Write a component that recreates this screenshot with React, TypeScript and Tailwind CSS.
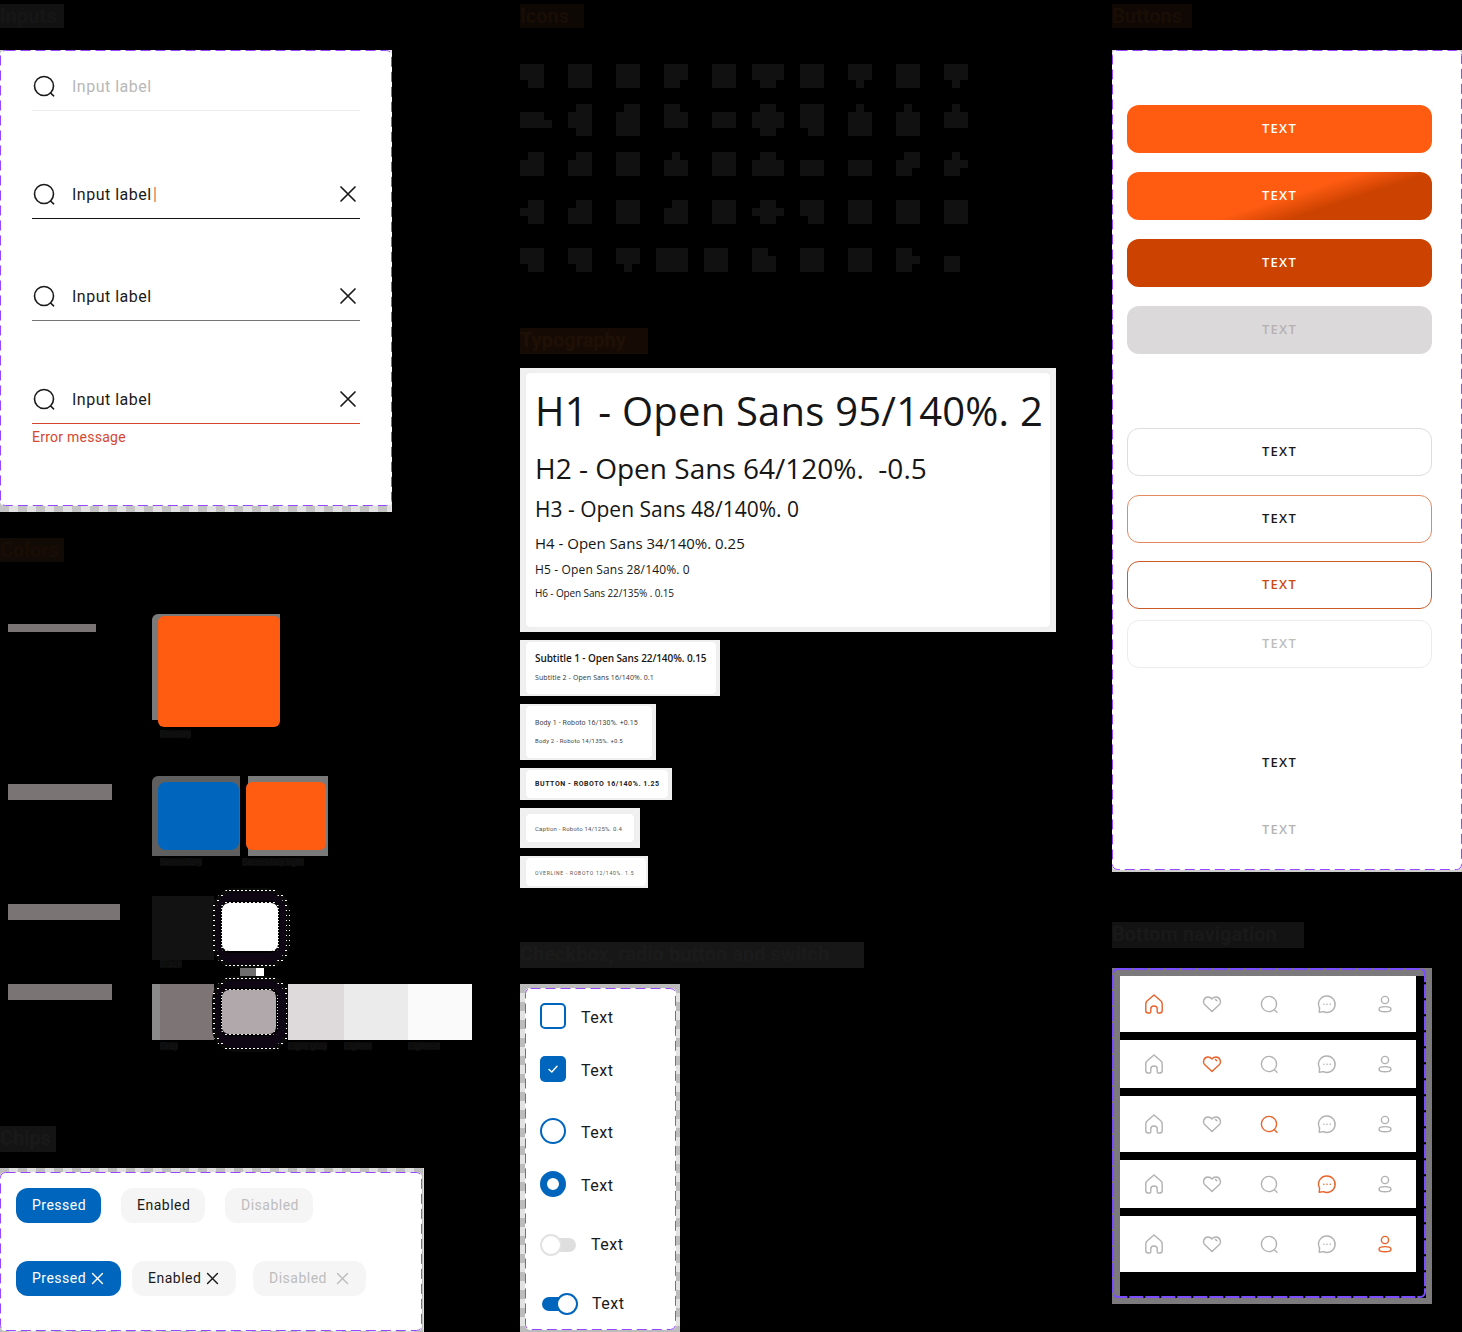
import React from "react";

const ICONS: [number, number, string[]][][] = [
  [
    [0, 64, ["111", "111", "011"]], [48, 64, ["111", "111", "111"]], [96, 64, ["111", "111", "111"]], [144, 64, ["111", "111", "110"]], [192, 64, ["111", "111", "111"]],
    [232, 64, ["1111", "1111", "0110"]], [280, 64, ["111", "111", "111"]], [328, 64, ["111", "111", "010"]], [376, 64, ["111", "111", "111"]], [424, 64, ["111", "111", "010"]],
  ],
  [
    [0, 112, ["1110", "1111"]], [48, 104, ["011", "111", "111", "011"]], [96, 104, ["011", "111", "111", "111"]], [144, 104, ["110", "111", "111"]], [192, 112, ["111", "111"]],
    [232, 104, ["0110", "1111", "1111", "0110"]], [280, 104, ["111", "111", "111", "011"]], [328, 104, ["010", "111", "111", "111"]], [376, 104, ["010", "111", "111", "111"]], [424, 104, ["010", "111", "111"]],
  ],
  [
    [0, 152, ["011", "111", "111"]], [48, 152, ["011", "111", "111"]], [96, 152, ["111", "111", "111"]], [144, 152, ["010", "111", "111"]], [192, 152, ["111", "111", "111"]],
    [232, 152, ["0110", "1111", "1111"]], [280, 160, ["111", "111"]], [328, 160, ["111", "111"]], [376, 152, ["011", "111", "110"]], [424, 152, ["010", "111", "110"]],
  ],
  [
    [0, 200, ["011", "111", "011"]], [48, 200, ["011", "111", "111"]], [96, 200, ["111", "111", "111"]], [144, 200, ["011", "111", "111"]], [192, 200, ["111", "111", "111"]],
    [232, 200, ["0110", "1111", "0110"]], [280, 200, ["111", "111", "011"]], [328, 200, ["111", "111", "111"]], [376, 200, ["111", "111", "111"]], [424, 200, ["111", "111", "111"]],
  ],
  [
    [0, 248, ["111", "111", "011"]], [48, 248, ["111", "111", "011"]], [96, 248, ["111", "111", "010"]], [136, 248, ["1111", "1111", "1111"]], [184, 248, ["111", "111", "111"]],
    [232, 248, ["110", "111", "111"]], [280, 248, ["111", "111", "111"]], [328, 248, ["111", "111", "111"]], [376, 248, ["110", "111", "110"]], [424, 256, ["11", "11"]],
  ],
];

function IconSheet() {
  return (
    <svg width="448" height="272" viewBox="0 0 448 272" className="block">
      {ICONS.flat().map(([x, y, rows], i) =>
        rows.map((row, r) =>
          row.split("").map((c, k) =>
            c === "1" ? <rect key={`${i}-${r}-${k}`} x={x + k * 8} y={y + r * 8} width="8" height="8" fill="#111111" /> : null,
          ),
        ),
      )}
    </svg>
  );
}

function Dash({ color = "#9747ff", dash = "10 5", sw = 1 }: { color?: string; dash?: string; sw?: number }) {
  const inset = sw / 2;
  return (
    <svg className="absolute inset-0 w-full h-full pointer-events-none">
      <rect
        x={inset}
        y={inset}
        rx="5"
        className={sw === 1 ? "w-[calc(100%-1px)] h-[calc(100%-1px)]" : "w-[calc(100%-2px)] h-[calc(100%-2px)]"}
        fill="none"
        stroke={color}
        strokeWidth={sw}
        strokeDasharray={dash}
      />
    </svg>
  );
}

function Search() {
  return (
    <svg width="24" height="24" viewBox="0 0 24 24" fill="none">
      <circle cx="12" cy="12" r="9.5" stroke="currentColor" strokeWidth="1.6" />
      <path d="M18.6 19 L21.6 21.8" stroke="currentColor" strokeWidth="1.6" strokeLinecap="round" />
    </svg>
  );
}

function Close({ size = 24, width = 1.7 }: { size?: number; width?: number }) {
  return (
    <svg width={size} height={size} viewBox="0 0 24 24" fill="none" className="shrink-0">
      <path d="M5 5 L19 19 M19 5 L5 19" stroke="currentColor" strokeWidth={width} strokeLinecap="round" />
    </svg>
  );
}

function InputRow({ line, text, mt, close = true, caret = false }: { line: string; text: string; mt: string; close?: boolean; caret?: boolean }) {
  return (
    <div className={`${mt} h-[49px] flex flex-col text-[#1a1a1a]`}>
      <div className="flex-1 flex items-center">
        <Search />
        <span className={`ml-[16px] mt-px text-[16px] leading-[24px] tracking-[0.5px] ${text}`}>Input label</span>
        {caret && <span className="ml-[2px] w-[2px] h-[15px] bg-[#f4a36a]" />}
        {close && (
          <span className="ml-auto">
            <Close />
          </span>
        )}
      </div>
      <div className={`h-px ${line}`} />
    </div>
  );
}

function Title({ children, className }: { children: React.ReactNode; className: string }) {
  return <div className={`font-bold whitespace-nowrap text-[20px] leading-[24px] ${className}`}>{children}</div>;
}

function Halo({ swatch, h, inner, pt }: { swatch: string; h: string; inner: string; pt: string }) {
  return (
    <div className={`${h} w-[78px] -ml-[2px] shrink-0 rounded-[24px] bg-[#0a0a0a] bg-[radial-gradient(circle,#ffffff_0.6px,transparent_1px)] bg-[length:4px_5px] p-[4px]`}>
      <div className={`h-full rounded-[20px] bg-[#0d0512] pl-[4px] ${pt}`}>
        <div className="w-fit rounded-[9px] bg-[radial-gradient(circle,#e8e8e8_0.5px,#000000_1px)] bg-[length:4px_3px] p-[2px]">
          <div className={`${inner} rounded-[7px] ${swatch}`} />
        </div>
      </div>
    </div>
  );
}

function Caption({ children, className = "" }: { children: React.ReactNode; className?: string }) {
  return <div className={`text-[9px] leading-[8px] h-[8px] whitespace-nowrap bg-[#0c0c0c] text-[#141414] w-fit ${className}`}>{children}</div>;
}

function MiniCard({ outer, inner, children }: { outer: string; inner: string; children: React.ReactNode }) {
  return (
    <div className={`bg-[#f0f0f0] ${outer}`}>
      <div className={`bg-white rounded-[5px] border border-[#eeeeee] ${inner}`}>{children}</div>
    </div>
  );
}

function Btn({ cls, mt }: { cls: string; mt: string }) {
  return (
    <div className={`h-[48px] w-[305px] rounded-[12px] flex items-center justify-center font-['Open_Sans',sans-serif] font-semibold text-[13px] tracking-[1.25px] ${mt} ${cls}`}>TEXT</div>
  );
}

function Chip({ label, cls, w, close, gap = "gap-[3px]" }: { label: string; cls: string; w: string; close?: boolean; gap?: string }) {
  return (
    <div className={`h-[35px] rounded-[12px] flex items-center pl-[16px] text-[14px] tracking-[0.5px] ${gap} ${w} ${cls}`}>
      <span>{label}</span>
      {close && <Close size={17} width={2} />}
    </div>
  );
}

type NavName = "home" | "heart" | "search" | "chat" | "user";
function NavIcon({ name, active }: { name: NavName; active: boolean }) {
  const c = active ? "text-[#e8622a]" : "text-[#b3b1b1]";
  const p = { stroke: "currentColor", strokeWidth: 1.4, fill: "none", strokeLinecap: "round" as const, strokeLinejoin: "round" as const };
  return (
    <svg width="22" height="22" viewBox="0 0 22 22" className={`${c} justify-self-center`}>
      {name === "home" && <path {...p} d="M11 2 L4 8 Q2.8 9.2 2.8 11 V17.5 Q2.8 20 5.2 20 H6.6 Q7.8 20 7.8 18.8 V16 Q7.8 13 11 13 Q14.2 13 14.2 16 V18.8 Q14.2 20 15.4 20 H16.8 Q19.2 20 19.2 17.5 V11 Q19.2 9.2 18 8 Z" />}
      {name === "heart" && (
        <>
          <path {...p} d="M11 18.5 L3.8 11.8 C1.4 9.4 2.6 4 7 4 C9 4 10.2 5 11 6 C11.8 5 13 4 15 4 C19.4 4 20.6 9.4 18.2 11.8 Z" />
          <path {...p} d="M14.5 6.5 L15.8 7.8" />
        </>
      )}
      {name === "search" && (
        <>
          <circle {...p} cx="11" cy="11" r="7.6" />
          <path {...p} d="M16.4 16.8 L19 19.2" />
        </>
      )}
      {name === "chat" && (
        <>
          <path {...p} d="M11 3 A8.2 8.2 0 1 1 7.4 18.6 L3.2 19.2 L3.6 15.2 A8.2 8.2 0 0 1 11 3 Z" />
          <path {...p} strokeWidth={1.5} d="M7.8 11.2 H7.85 M11 11.2 H11.05 M14.2 11.2 H14.25" />
        </>
      )}
      {name === "user" && (
        <>
          <circle {...p} cx="11" cy="7" r="3.6" />
          <ellipse {...p} cx="11" cy="16.2" rx="6" ry="2.6" />
        </>
      )}
    </svg>
  );
}

function NavRow({ active, h }: { active: number; h: string }) {
  const names: NavName[] = ["home", "heart", "search", "chat", "user"];
  return (
    <div className={`${h} bg-white w-[296px] grid grid-cols-5 items-center pl-[5px] pr-[2px]`}>
      {names.map((n, i) => (
        <NavIcon key={n} name={n} active={i === active} />
      ))}
    </div>
  );
}

function Check({ children }: { children: React.ReactNode }) {
  return <div className="flex items-center">{children}</div>;
}

const labelText = "text-[16px] leading-[24px] tracking-[0.5px] text-[#1a1a1a]";

export default function App() {
  return (
    <div className="w-[1462px] h-[1332px] overflow-hidden bg-black flex font-['Roboto',sans-serif]">
      {/* column 1 */}
      <div className="w-[520px] shrink-0">
        <Title className="w-[64px] h-[28px] pt-[4px] bg-clip-content bg-[#121212] text-[#161616]">Inputs</Title>
        <div className="mt-[22px] w-[392px] h-[462px] bg-[repeating-linear-gradient(90deg,#c4c4c4_0_9px,#e2e2e2_9px_18px)]">
          <div className="relative w-[392px] h-[456px] bg-white rounded-[5px] px-[32px] pt-[12px]">
            <Dash />
            <InputRow mt="" line="bg-[#ececec]" text="text-[#b8b8b8]" close={false} />
            <InputRow mt="mt-[59px]" line="bg-[#111111]" text="" caret />
            <InputRow mt="mt-[53px]" line="bg-[#757575]" text="" />
            <InputRow mt="mt-[54px]" line="bg-[#d5482f]" text="" />
            <div className="mt-[3px] text-[14px] leading-[20px] tracking-[0.25px] text-[#d5482f]">Error message</div>
          </div>
        </div>

        <Title className="mt-[26px] w-[64px] h-[24px] bg-[#120a04] text-[#190d05]">Colors</Title>

        {/* Row 1 */}
        <div className="mt-[52px] h-[126px] flex items-start">
          <div className="w-[152px] pl-[8px] pt-[10px]">
            <div className="w-[88px] h-[8px] bg-[#7a7475] text-[8px] leading-[8px] text-[#7a7475] whitespace-nowrap">Primary color</div>
          </div>
          <div className="w-[128px]">
            <div className="h-[106px] bg-[#7a7a7a] rounded-tl-[6px] pl-[6px] pt-[2px]">
              <div className="h-[111px] bg-[#ff5c12] rounded-[6px]" />
            </div>
            <Caption className="mt-[10px] ml-[8px]">Primary</Caption>
          </div>
        </div>

        {/* Row 2 */}
        <div className="mt-[36px] h-[90px] flex items-start">
          <div className="w-[152px] pl-[8px] pt-[8px]">
            <div className="w-[104px] h-[16px] bg-[#7a7475] text-[13px] leading-[16px] text-[#7a7475] whitespace-nowrap">Secondary colors</div>
          </div>
          <div>
            <div className="w-[88px] h-[80px] bg-[#5f5f5f] flex items-center pl-[6px] rounded-tl-[6px]">
              <div className="w-[81px] h-[68px] bg-[#0066bd] rounded-[8px]" />
            </div>
            <Caption className="mt-[2px] ml-[8px]">Secondary</Caption>
          </div>
          <div className="ml-[8px]">
            <div className="w-[80px] h-[80px] bg-[#7a7a7a] flex items-center">
              <div className="-ml-[2px] w-[80px] h-[68px] bg-[#ff5c12] rounded-[6px]" />
            </div>
            <Caption className="mt-[2px] -ml-[6px]">Secondary light</Caption>
          </div>
        </div>

        {/* Row 3 */}
        <div className="mt-[22px] h-[80px] flex items-start">
          <div className="w-[152px] pl-[8px] pt-[16px]">
            <div className="w-[112px] h-[16px] bg-[#7a7475] text-[11px] leading-[16px] text-[#7a7475] whitespace-nowrap">Black and white colors</div>
          </div>
          <div className="w-[62px] shrink-0 pt-[8px]">
            <div className="h-[64px] bg-[#121212]" />
            <Caption className="ml-[8px]">Black</Caption>
          </div>
          <Halo swatch="bg-white" h="h-[80px]" inner="w-[56px] h-[48px]" pt="pt-[9px]" />
        </div>

        <div className="h-[8px] ml-[240px] flex">
          <div className="w-[16px] h-[8px] bg-[#6e6e6e]" />
          <div className="w-[8px] h-[8px] bg-white" />
        </div>

        {/* Row 4 */}
        <div className="h-[76px] flex items-start">
          <div className="w-[152px] pl-[8px] pt-[8px]">
            <div className="w-[104px] h-[16px] bg-[#7a7475] text-[13px] leading-[16px] text-[#7a7475] whitespace-nowrap">Neutral colors</div>
          </div>
          <div className="w-[62px] shrink-0 pt-[8px]">
            <div className="h-[56px] bg-[#7d7476] border-l-8 border-[#8b8b8b]" />
            <Caption className="mt-[2px] ml-[8px]">Gray</Caption>
          </div>
          <Halo swatch="bg-[#b0a8aa]" h="h-[76px]" inner="w-[54px] h-[44px]" pt="pt-[8px]" />
          <div className="w-[56px] shrink-0 pt-[8px] -ml-[2px]">
            <div className="h-[56px] bg-[#dedadb]" />
            <Caption className="mt-[2px]">Light gray</Caption>
          </div>
          <div className="w-[64px] shrink-0 pt-[8px]">
            <div className="h-[56px] bg-[#ebebeb]" />
            <Caption className="mt-[2px]">Lighter</Caption>
          </div>
          <div className="w-[64px] shrink-0 pt-[8px]">
            <div className="h-[56px] bg-[#fafafa]" />
            <Caption className="mt-[2px]">Lightest</Caption>
          </div>
        </div>

        <Title className="mt-[74px] w-[56px] h-[26px] bg-[#141414] text-[#191919]">Chips</Title>
        <div className="mt-[16px] w-[424px] h-[164px] bg-[repeating-linear-gradient(90deg,#bdbdbd_0_9px,#dedede_9px_18px)] pt-[4px]">
          <div className="relative w-[422px] h-[159px] bg-white rounded-[5px] px-[16px] pt-[16px]">
            <Dash />
            <div className="flex">
              <Chip label="Pressed" w="w-[85px]" cls="bg-[#0066bd] text-white" />
              <Chip label="Enabled" w="w-[84px] ml-[20px]" cls="bg-[#f5f5f5] text-[#1a1a1a]" />
              <Chip label="Disabled" w="w-[88px] ml-[20px]" cls="bg-[#f5f5f5] text-[#bdbdbd]" />
            </div>
            <div className="flex mt-[38px]">
              <Chip label="Pressed" w="w-[105px]" cls="bg-[#0066bd] text-white" close />
              <Chip label="Enabled" w="w-[104px] ml-[11px]" cls="bg-[#f5f5f5] text-[#1a1a1a]" close />
              <Chip label="Disabled" w="w-[113px] ml-[17px]" gap="gap-[7px]" cls="bg-[#f5f5f5] text-[#bdbdbd]" close />
            </div>
          </div>
        </div>
      </div>

      {/* column 2 */}
      <div className="w-[592px] shrink-0">
        <Title className="w-[64px] h-[28px] pt-[4px] bg-clip-content bg-[#0e0804] text-[#190d05]">Icons</Title>
        <div className="-mt-[28px]">
          <IconSheet />
        </div>
        <Title className="mt-[56px] w-[128px] h-[26px] bg-[#160b04] text-[#1f1006]">Typography</Title>
        <MiniCard outer="mt-[14px] w-[536px] h-[264px] px-[5px] pt-[4px] pb-[4px]" inner="h-full pl-[9px] font-['Open_Sans',sans-serif] text-[#161616]">
          <div className="pt-[10px] text-[40px] leading-[56px] whitespace-nowrap tracking-[0.2px]">H1 - Open Sans 95/140%. 2</div>
          <div className="mt-[9px] text-[28px] leading-[40px] font-medium whitespace-nowrap">H2 - Open Sans 64/120%.&nbsp; -0.5</div>
          <div className="mt-[6px] text-[21px] leading-[30px] whitespace-nowrap">H3 - Open Sans 48/140%. 0</div>
          <div className="mt-[7px] text-[15px] leading-[24px] whitespace-nowrap font-medium">H4 - Open Sans 34/140%. 0.25</div>
          <div className="mt-[6px] text-[12px] leading-[18px] whitespace-nowrap tracking-[0.16px]">H5 - Open Sans 28/140%. 0</div>
          <div className="mt-[7px] text-[10px] leading-[14px] whitespace-nowrap tracking-[-0.12px]">H6 - Open Sans 22/135% . 0.15</div>
        </MiniCard>
        <MiniCard outer="mt-[8px] w-[200px] h-[56px] pl-[5px] pr-[3px] py-[1px]" inner="h-full pl-[9px] pt-[8px] font-['Open_Sans',sans-serif] text-[#161616]">
          <div className="text-[10px] leading-[16px] font-semibold whitespace-nowrap tracking-[-0.08px]">Subtitle 1 - Open Sans 22/140%. 0.15</div>
          <div className="mt-[6px] text-[7px] leading-[12px] font-medium whitespace-nowrap text-[#333333] tracking-[0.1px]">Subtitle 2 - Open Sans 16/140%. 0.1</div>
        </MiniCard>
        <MiniCard outer="mt-[8px] w-[136px] h-[56px] pl-[5px] pr-[3px] py-[1px]" inner="h-full pl-[9px] pt-[11px] text-[#444444]">
          <div className="text-[7px] leading-[12px] whitespace-nowrap tracking-[0.1px]">Body 1 - Roboto 16/130%. +0.15</div>
          <div className="mt-[6px] text-[6px] leading-[12px] whitespace-nowrap tracking-[0.2px]">Body 2 - Roboto 14/135%. +0.5</div>
        </MiniCard>
        <MiniCard outer="mt-[8px] w-[152px] h-[32px] pl-[5px] pr-[3px] py-[1px]" inner="h-full pl-[9px] flex items-center text-[#222222]">
          <div className="text-[7px] font-bold tracking-[0.55px] whitespace-nowrap">BUTTON - ROBOTO 16/140%. 1.25</div>
        </MiniCard>
        <MiniCard outer="mt-[8px] w-[120px] h-[40px] pl-[5px] pr-[5px] py-[5px]" inner="h-full pl-[9px] flex items-center text-[#555555]">
          <div className="text-[6px] tracking-[0.2px] whitespace-nowrap">Caption - Roboto 14/125%. 0.4</div>
        </MiniCard>
        <MiniCard outer="mt-[8px] w-[128px] h-[32px] pl-[5px] pr-[1px] py-[1px]" inner="h-full pl-[9px] pt-[3px] flex items-center text-[#555555]">
          <div className="text-[5px] tracking-[0.75px] whitespace-nowrap">OVERLINE - ROBOTO 12/140%. 1.5</div>
        </MiniCard>

        <Title className="mt-[54px] w-[344px] h-[26px] bg-[#171717] text-[#1b1b1b]">Checkbox, radio button and switch</Title>
        <div className="mt-[16px] w-[160px] h-[348px] bg-[repeating-linear-gradient(180deg,#bcbcbc_0_9px,#e2e2e2_9px_18px)] pl-[5px] pr-[4px] pt-[4px] pb-[2px]">
          <div className="relative h-full bg-white rounded-[5px] pl-[15px] pt-[15px]">
            <Dash />
            <Check>
              <span className="w-[26px] h-[26px] rounded-[5px] border-2 border-[#0066bd]" />
              <span className={`ml-[15px] translate-y-[2px] ${labelText}`}>Text</span>
            </Check>
            <Check>
              <span className="mt-[27px] w-[26px] h-[26px] rounded-[5px] bg-[#0066bd] flex items-center justify-center">
                <svg width="14" height="14" viewBox="0 0 14 14" fill="none">
                  <path d="M3 7.4 L5.8 10 L11 4.2" stroke="white" strokeWidth="1.4" strokeLinecap="round" strokeLinejoin="round" />
                </svg>
              </span>
              <span className={`ml-[15px] mt-[27px] translate-y-[2px] ${labelText}`}>Text</span>
            </Check>
            <Check>
              <span className="mt-[36px] w-[26px] h-[26px] rounded-full border-2 border-[#0066bd]" />
              <span className={`ml-[15px] mt-[36px] translate-y-[2px] ${labelText}`}>Text</span>
            </Check>
            <Check>
              <span className="mt-[27px] w-[26px] h-[26px] rounded-full border-[7px] border-[#0066bd] bg-white" />
              <span className={`ml-[15px] mt-[27px] translate-y-[2px] ${labelText}`}>Text</span>
            </Check>
            <Check>
              <span className="mt-[36px] w-[36px] h-[24px] flex items-center">
                <span className="w-[22px] h-[22px] rounded-full bg-white border-2 border-[#e2e2e2] shrink-0 z-10" />
                <span className="-ml-[10px] w-[24px] h-[14px] rounded-r-full bg-[#dedede]" />
              </span>
              <span className={`ml-[15px] mt-[36px] ${labelText}`}>Text</span>
            </Check>
            <Check>
              <span className="mt-[35px] ml-[2px] w-[36px] h-[24px] flex items-center">
                <span className="w-[24px] h-[14px] rounded-l-full bg-[#0066bd]" />
                <span className="-ml-[10px] w-[22px] h-[22px] rounded-full bg-white border-2 border-[#0066bd] shrink-0" />
              </span>
              <span className={`ml-[14px] mt-[35px] ${labelText}`}>Text</span>
            </Check>
          </div>
        </div>
      </div>

      {/* column 3 */}
      <div className="w-[350px] shrink-0">
        <Title className="w-[80px] h-[28px] pt-[4px] bg-clip-content bg-[#0f0804] text-[#190d05]">Buttons</Title>
        <div className="mt-[22px] w-[350px] h-[822px] bg-[#cfcfcf] pb-[2px]">
          <div className="relative h-[820px] bg-white rounded-[5px] pl-[15px] pt-[55px]">
            <Dash />
            <Btn mt="" cls="bg-[#ff5c12] text-white" />
            <Btn mt="mt-[19px]" cls="bg-[linear-gradient(162deg,#ff5c12_52%,#cc4200_68%)] text-white" />
            <Btn mt="mt-[19px]" cls="bg-[#cc4200] text-white" />
            <Btn mt="mt-[19px]" cls="bg-[#dcd9da] text-[#b5b1b2]" />
            <Btn mt="mt-[74px]" cls="border border-[#dddddd] text-[#1a1a1a]" />
            <Btn mt="mt-[19px]" cls="border border-[#e58a5f] text-[#1a1a1a]" />
            <Btn mt="mt-[18px]" cls="border border-[#cc5a26] text-[#cc4a0e]" />
            <Btn mt="mt-[11px]" cls="border border-[#ececec] text-[#bdbdbd]" />
            <Btn mt="mt-[71px]" cls="text-[#1a1a1a]" />
            <Btn mt="mt-[19px]" cls="text-[#b5b5b5]" />
          </div>
        </div>

        <Title className="mt-[50px] w-[192px] h-[26px] bg-[#131313] text-[#191919]">Bottom navigation</Title>
        <div className="mt-[20px] w-[320px] h-[336px] bg-[#7c7a7d] pr-[6px] pb-[6px]">
          <div className="relative h-full pl-[8px] pt-[8px]">
            <div className="h-full bg-black flex flex-col gap-[8px]">
              <NavRow active={0} h="h-[56px]" />
              <NavRow active={1} h="h-[48px]" />
              <NavRow active={2} h="h-[56px]" />
              <NavRow active={3} h="h-[48px]" />
              <NavRow active={4} h="h-[56px]" />
            </div>
            <Dash color="#7a4dff" dash="14 2" sw={2} />
          </div>
        </div>
      </div>
    </div>
  );
}
